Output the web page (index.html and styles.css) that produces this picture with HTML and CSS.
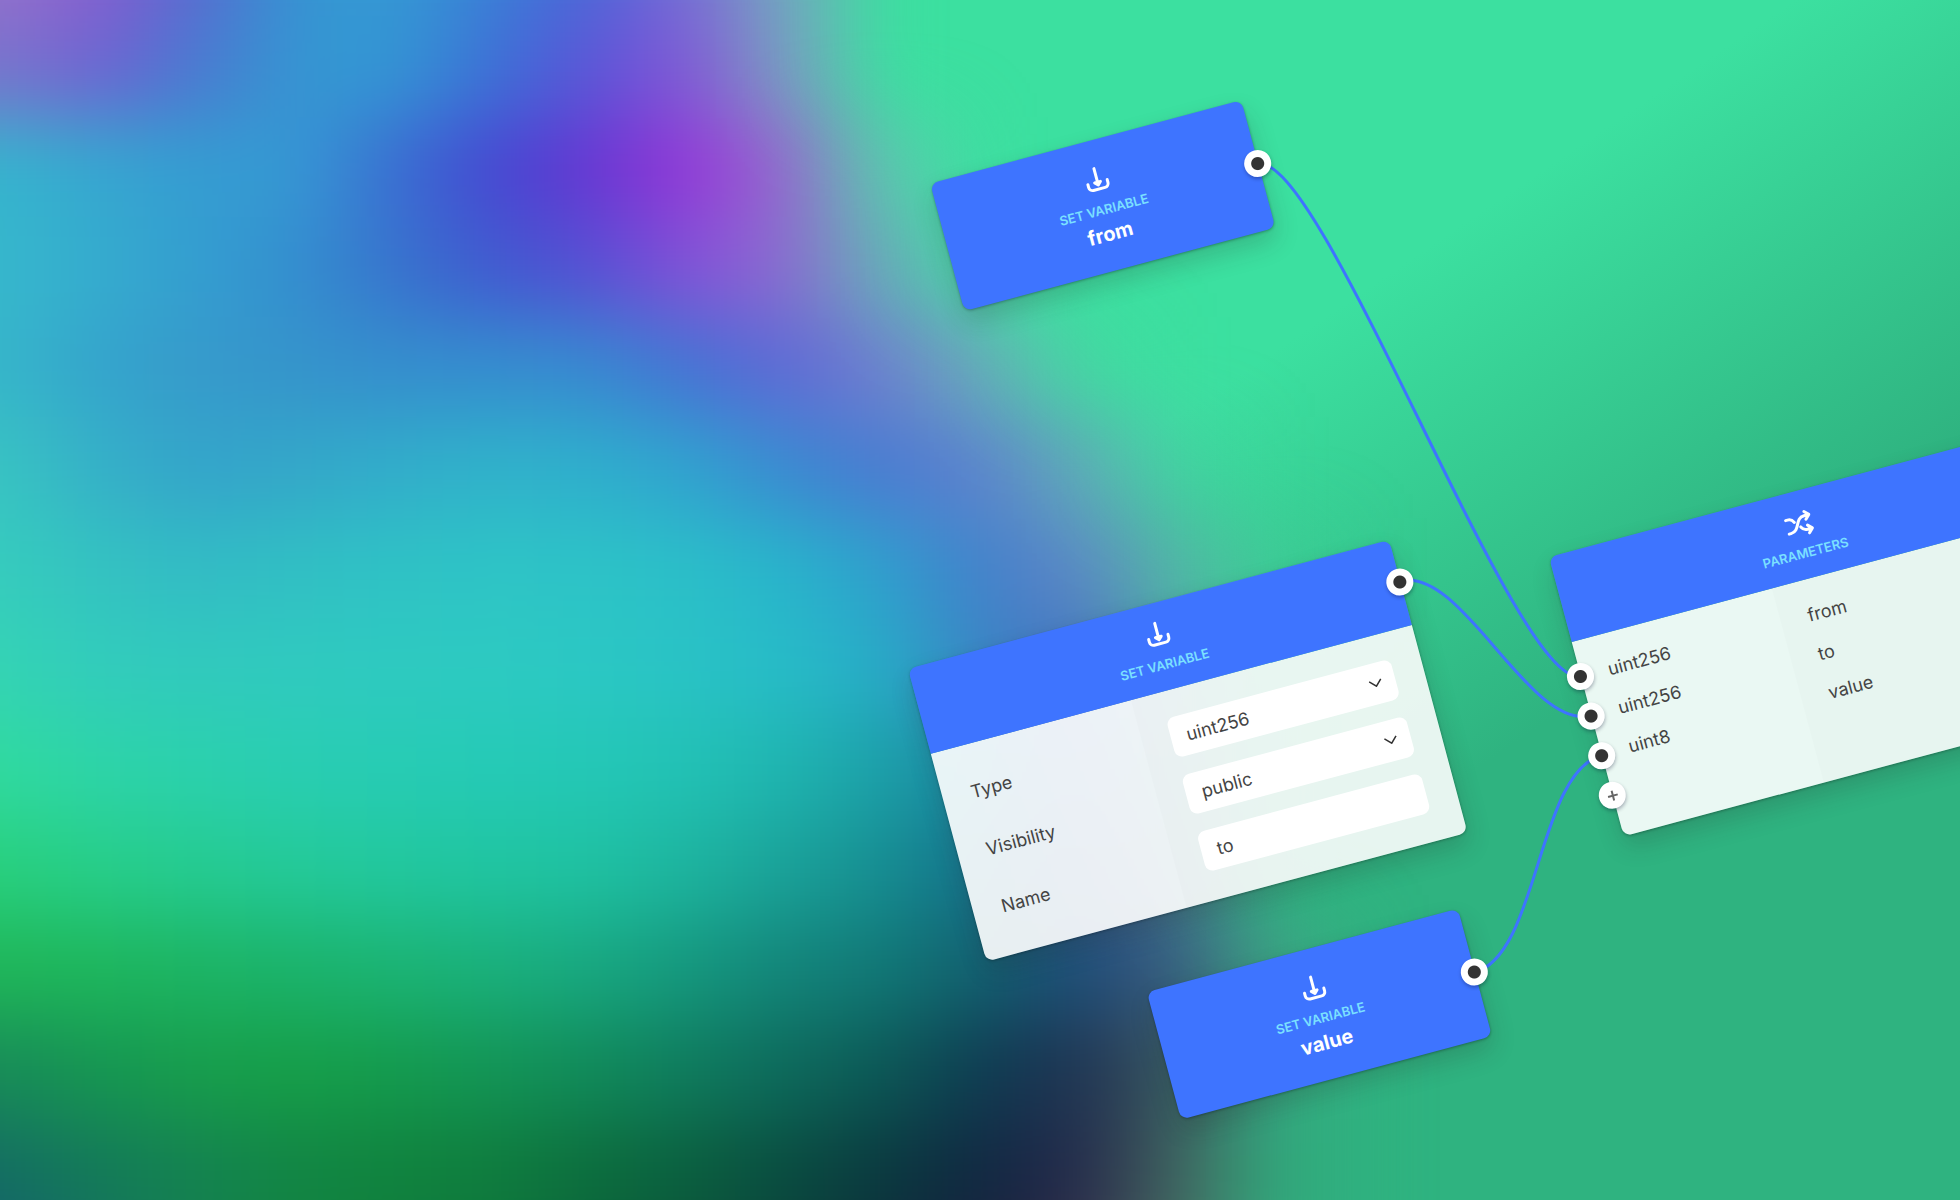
FILE: index.html
```html
<!DOCTYPE html>
<html lang="en">
<head>
<meta charset="utf-8">
<title>Flow editor</title>
<link rel="stylesheet" href="styles.css">
</head>
<body>
<main class="stage">
  <div class="glow" aria-hidden="true">
    <div class="band band-1"></div>
    <div class="band band-2"></div>
    <div class="band band-3"></div>
    <div class="band band-4"></div>
    <div class="band band-5"></div>
    <div class="band band-6"></div>
    <div class="band band-7"></div>
    <div class="band band-8"></div>
    <div class="band band-9"></div>
    <div class="band band-10"></div>
    <div class="band band-11"></div>
    <div class="band band-12"></div>
    <div class="band band-13"></div>
    <div class="band band-14"></div>
  </div>

  <div class="canvas">
    <svg class="edges" width="1400" height="1400" aria-hidden="true">
      <path d="M1172 484C1238 484 1286 1062 1352 1062"/>
      <path d="M1202 924C1266 924 1288 1103 1352 1103"/>
      <path d="M1172 1321C1240 1321 1284 1144 1352 1144"/>
    </svg>

    <section class="node node-compact node-from">
      <svg class="icon" viewBox="-1 0 24 24" aria-hidden="true"><path d="M12 0v15M9 14l3 3 3-3zM2 14v3a4 4 0 0 0 4 4h12a4 4 0 0 0 4-4v-3"/></svg>
      <span class="kind">SET VARIABLE</span>
      <h2 class="name">from</h2>
      <button class="port port-out" type="button" aria-label="Output"></button>
    </section>

    <section class="node node-to">
      <header class="head">
        <svg class="icon" viewBox="-1 0 24 24" aria-hidden="true"><path d="M12 0v15M9 14l3 3 3-3zM2 14v3a4 4 0 0 0 4 4h12a4 4 0 0 0 4-4v-3"/></svg>
        <span class="kind">SET VARIABLE</span>
        <button class="port port-out" type="button" aria-label="Output"></button>
      </header>
      <div class="body">
        <div class="labels">
          <label for="type">Type</label>
          <label for="visibility">Visibility</label>
          <label for="name">Name</label>
        </div>
        <div class="fields">
          <div class="pick">
            <select id="type"><option>uint256</option><option>uint8</option></select>
            <svg class="chevron" viewBox="0 0 28 16" aria-hidden="true"><path d="M2 2l12 12 12-12"/></svg>
          </div>
          <div class="pick">
            <select id="visibility"><option>public</option><option>private</option></select>
            <svg class="chevron" viewBox="0 0 28 16" aria-hidden="true"><path d="M2 2l12 12 12-12"/></svg>
          </div>
          <input id="name" type="text" value="to">
        </div>
      </div>
    </section>

    <section class="node node-compact node-value">
      <svg class="icon" viewBox="-1 0 24 24" aria-hidden="true"><path d="M12 0v15M9 14l3 3 3-3zM2 14v3a4 4 0 0 0 4 4h12a4 4 0 0 0 4-4v-3"/></svg>
      <span class="kind">SET VARIABLE</span>
      <h2 class="name">value</h2>
      <button class="port port-out" type="button" aria-label="Output"></button>
    </section>

    <section class="node node-params">
      <header class="head">
        <svg class="icon" viewBox="-1 -1 24 24" aria-hidden="true"><path d="M0 5h2q4 0 6 4M0 19h2C12 19 9 5 19 5h5M13 15q2 4 6 4h5M20 1l4 4-4 4M20 15l4 4-4 4"/></svg>
        <span class="kind">PARAMETERS</span>
      </header>
      <div class="body">
        <ul class="types"><li>uint256</li><li>uint256</li><li>uint8</li></ul>
        <ul class="names"><li>from</li><li>to</li><li>value</li></ul>
      </div>
      <div class="inputs">
        <button class="port" type="button" aria-label="Input 1"></button>
        <button class="port" type="button" aria-label="Input 2"></button>
        <button class="port" type="button" aria-label="Input 3"></button>
        <button class="port port-add" type="button" aria-label="Add input"><svg viewBox="0 0 12 12" aria-hidden="true"><path d="M6 1v10M1 6h10"/></svg></button>
      </div>
    </section>
  </div>
</main>
</body>
</html>
```
FILE: styles.css
```css
* { box-sizing: border-box; }

body {
  margin: 0;
  font-family: Inter, "Liberation Sans", sans-serif;
  font-size: 18px;
  color: #444;
}

.stage {
  position: relative;
  min-height: 100vh;
  overflow: hidden;
  background: linear-gradient(146deg, #3ce0a0 48%, #2fb380 70%);
}

/* Colour field: one gradient per band, melted together by the blur */
.glow {
  position: absolute;
  top: -7%;
  bottom: -10%;
  left: -5%;
  width: 75%;
  display: grid;
  grid-template-rows: repeat(14, 1fr);
  filter: blur(36px);
}
.band-1 { background: linear-gradient(90deg, #9b73ca, #9872cb, #8a5ccf, #5a68d0, #3594d2, #349ad4, #3a82d6, #4a66d8, #7a6cd6, #76a8bf, transparent, transparent, transparent, transparent, transparent, transparent); }
.band-2 { background: linear-gradient(90deg, #7a74cc, #7a74cc, #7062d2, #4a79d0, #3596d2, #3397d3, #3b72d6, #5a55d8, #8458d6, #7c9cc2, transparent, transparent, transparent, transparent, transparent, transparent); }
.band-3 { background: linear-gradient(90deg, #36b4cd, #36b4cd, #36a6d0, #359cd1, #3599d3, #3a70d2, #4448d2, #6636d2, #9636d8, #966ace, #5acaad, transparent, transparent, transparent, transparent, transparent); }
.band-4 { background: linear-gradient(90deg, #36bbcc, #36b8cc, #35acce, #349ed0, #348fcf, #3774cd, #405ad0, #554fd3, #8450d8, #8c6cd0, #68acb8, rgba(90, 200, 168, .3), transparent, transparent, transparent, transparent); }
.band-5 { background: linear-gradient(90deg, #36b8ca, #36b6ca, #35a4cc, #369acb, #3594cb, #358ecd, #358dcf, #378ad0, #4573d4, #6068d6, #7080cf, #68acb8, rgba(85, 200, 165, .3), transparent, transparent, transparent); }
.band-6 { background: linear-gradient(90deg, #38c6c2, #38c4c2, #35b0c8, #34a4ca, #34a7c9, #32adca, #30b2ca, #2fafcc, #30a3cf, #3a8ad1, #4a7ad2, #6082ce, #60aab6, rgba(80, 195, 165, .3), transparent, transparent); }
.band-7 { background: linear-gradient(90deg, #36cebd, #36ccbd, #34c2c1, #33bbc5, #31bfc4, #2fc2c5, #2ec4c6, #2dc3c7, #2bbfc8, #28b4cb, #2f9fcd, #4280cc, #6086c6, #52b8a4, rgba(70, 200, 150, .3), transparent); }
.band-8 { background: linear-gradient(90deg, #34d6b4, #34d4b4, #32ccbc, #31cabd, #30cabf, #2ecac0, #2dcac1, #2bc8c4, #29c3c5, #27bcc8, #26acc6, #3a84c4, #4470c0, #4ca0a0, transparent, transparent); }
.band-9 { background: linear-gradient(90deg, #31db9e, #30da9f, #2dd4a8, #2bd1ad, #29ceb2, #27ccb4, #25cab6, #24c8b6, #22c2b5, #1fb5b0, #1ca0a9, #1a84a0, #3f68a8, #488c95, transparent, transparent); }
.band-10 { background: linear-gradient(90deg, #28d07c, #28d07e, #27ce89, #25cb91, #24ca99, #22c89e, #20c5a1, #1fc2a2, #1db49f, #1aa299, #168e92, #14708a, #2f5690, #4a7a90, transparent, transparent); }
.band-11 { background: linear-gradient(90deg, #1fb658, #1fb658, #1eb65c, #1cb464, #1bb36b, #1bb473, #1ab07b, #18a880, #15987e, #13857a, #117876, #12606e, #1e4c78, #3a5a80, #3da583, transparent); }
.band-12 { background: linear-gradient(90deg, #188a5a, #188c58, #169652, #179e4c, #169f48, #149b4e, #139556, #118b5a, #0f7c5e, #0d6a5c, #0c5956, #0e3c52, #203353, #3a5660, #35a880, transparent); }
.band-13 { background: linear-gradient(90deg, #146a66, #146e62, #147a58, #148350, #128644, #10833e, #0f7d3e, #0c6e3e, #0b603f, #0a4d40, #0b3a40, #102842, #26294c, #42625e, #32a87c, transparent); }
.band-14 { background: linear-gradient(90deg, #145a72, #145c70, #137260, #137f50, #11823f, #0f7c3c, #0d753b, #0a6138, #0a5238, #0a3e3a, #0b2c38, #181c38, #382f4a, #4a6a64, #32aa7c, transparent); }

.canvas {
  position: absolute;
  top: 0;
  left: 0;
  transform: rotate(-15deg);
  transform-origin: 0 0;
}

.edges {
  position: absolute;
  top: 0;
  left: 0;
  fill: none;
  stroke: #3e74ff;
  stroke-width: 3;
}

.node {
  position: absolute;
  width: 498px;
  border-radius: 8px;
  box-shadow: 0 1px 3px rgba(0, 0, 0, .3), 0 12px 24px rgba(40, 40, 40, .2);
}
.node-compact {
  display: flex;
  flex-direction: column;
  align-items: center;
  width: 322px;
  height: 132px;
  padding-top: 28px;
  background: #3e74ff;
}
.node-from { left: 851px; top: 418px; }
.node-to { left: 704px; top: 881px; }
.node-value { left: 851px; top: 1255px; }
.node-params { left: 1352px; top: 939px; }

.head {
  position: relative;
  display: flex;
  flex-direction: column;
  align-items: center;
  height: 88px;
  padding-top: 20px;
  background: #3e74ff;
  border-radius: 8px 8px 0 0;
}

.icon {
  width: 24px;
  height: 24px;
  fill: none;
  stroke: #fff;
  stroke-width: 3;
  stroke-linecap: round;
  stroke-linejoin: round;
  overflow: visible;
}
.kind { margin-top: 10px; font-size: 13px; line-height: 16px; font-weight: 600; color: #7be0ff; }
.name { margin: 0; font-size: 20px; line-height: 34px; font-weight: 700; color: #fff; }

.body {
  display: grid;
  grid-template-columns: 207px 1fr;
  border-radius: 0 0 8px 8px;
  overflow: hidden;
  background: rgba(255, 255, 255, .9);
}
.fields, .names { background: rgba(40, 0, 0, .01); }
.labels, .fields { display: grid; gap: 18px; padding: 27px 30px 29px 29px; }
.labels label { line-height: 41px; }

.pick { position: relative; }
.fields select, .fields input {
  display: block;
  width: 100%;
  height: 41px;
  padding: 0 16px;
  border: 0;
  border-radius: 8px;
  background: #fff;
  font: inherit;
  color: inherit;
  appearance: none;
}
.chevron {
  position: absolute;
  right: 13px;
  top: 16px;
  width: 14px;
  height: 8px;
  fill: none;
  stroke: #333;
  stroke-width: 3;
  pointer-events: none;
}

.types, .names { margin: 0; padding: 16px 28px 65px; list-style: none; line-height: 40px; }

.port {
  display: grid;
  place-items: center;
  width: 27px;
  height: 27px;
  padding: 0;
  border: 0;
  border-radius: 50%;
  background: radial-gradient(circle, #333 6px, #fff 7px);
  box-shadow: 0 2px 4px rgba(0, 0, 40, .3);
}
.port-out { position: absolute; right: -13px; top: calc(50% - 14px); }
.port-add { background: #fff; }
.port-add svg { width: 12px; height: 12px; stroke: #666; stroke-width: 2; }
.inputs { position: absolute; left: -14px; top: 110px; display: grid; gap: 14px; }
```
